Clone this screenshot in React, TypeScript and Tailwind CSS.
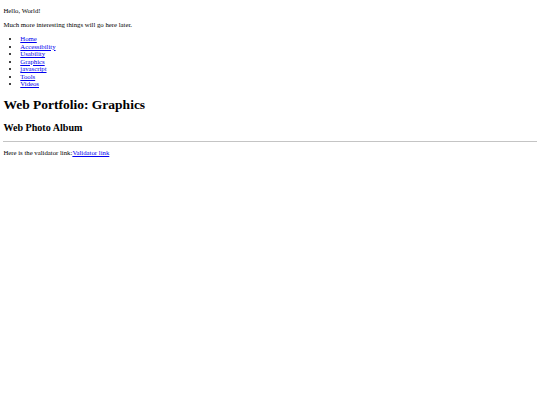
const links = ["Home", "Accessibility", "Usability", "Graphics", "javascript", "Tools", "Videos"];

export default function App() {
  return (
    <div className="w-[540px] px-[3.4px] font-['Liberation_Serif','Times_New_Roman',serif] text-[6.75px] leading-[7.5px] text-black">
      <p className="my-[6.75px]">Hello, World!</p>
      <p className="my-[6.75px]">Much more interesting things will go here later.</p>
      <ul className="my-[6.75px] list-disc pl-[16.9px]">
        {links.map((l) => (
          <li key={l}>
            <a href="#" className="text-[#0000ee] underline">
              {l}
            </a>
          </li>
        ))}
      </ul>
      <h1 className="mt-[9px] mb-[9.5px] text-[13.5px] font-bold leading-[15.5px]">Web Portfolio: Graphics</h1>
      <h2 className="mb-[8px] text-[10.1px] font-bold leading-[11.6px]">Web Photo Album</h2>
      <hr className="mt-[3.4px] border-t border-t-[#c4c4c4]" />
      <p className="mt-[7px]">
        Here is the validator link:
        <a href="#" className="text-[#0000ee] underline">
          Validator link
        </a>
      </p>
    </div>
  );
}
